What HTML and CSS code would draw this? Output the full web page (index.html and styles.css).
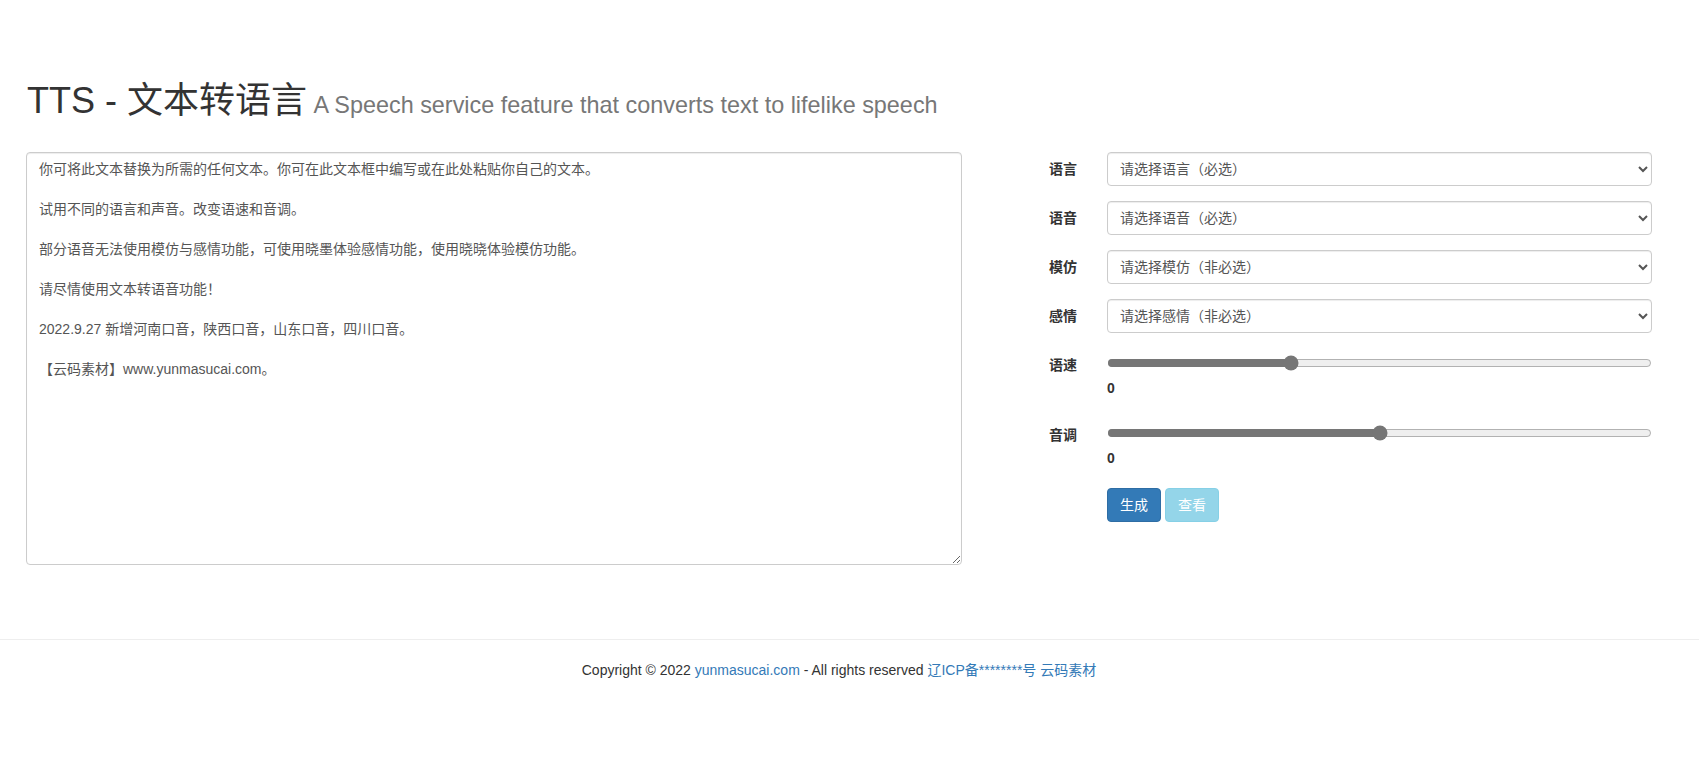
FILE: index.html
```html
<!DOCTYPE html>
<html lang="zh-CN">
<head>
    <meta charset="UTF-8">
    <meta name="viewport" content="width=device-width, initial-scale=1.0">
    <title>TTS - 文本转语言</title>
    <link rel="stylesheet" href="styles.css">
</head>
<body>
    <div class="container">
        <h1>TTS - 文本转语言<small> A Speech service feature that converts text to lifelike speech</small></h1>
        <div class="row">
            <div class="col-text">
                <textarea class="form-control text-input" id="text">你可将此文本替换为所需的任何文本。你可在此文本框中编写或在此处粘贴你自己的文本。

试用不同的语言和声音。改变语速和音调。

部分语音无法使用模仿与感情功能，可使用晓墨体验感情功能，使用晓晓体验模仿功能。

请尽情使用文本转语音功能！

2022.9.27 新增河南口音，陕西口音，山东口音，四川口音。

【云码素材】www.yunmasucai.com。</textarea>
            </div>
            <div class="col-form">
                <form class="form-horizontal">
                    <div class="form-group">
                        <label class="control-label" for="lang">语言</label>
                        <div class="control">
                            <select class="form-control" id="lang">
                                <option>请选择语言（必选）</option>
                            </select>
                        </div>
                    </div>
                    <div class="form-group">
                        <label class="control-label" for="voice">语音</label>
                        <div class="control">
                            <select class="form-control" id="voice">
                                <option>请选择语音（必选）</option>
                            </select>
                        </div>
                    </div>
                    <div class="form-group">
                        <label class="control-label" for="style">模仿</label>
                        <div class="control">
                            <select class="form-control" id="style">
                                <option>请选择模仿（非必选）</option>
                            </select>
                        </div>
                    </div>
                    <div class="form-group">
                        <label class="control-label" for="emotion">感情</label>
                        <div class="control">
                            <select class="form-control" id="emotion">
                                <option>请选择感情（非必选）</option>
                            </select>
                        </div>
                    </div>
                    <div class="form-group">
                        <label class="control-label" for="rate">语速</label>
                        <div class="control slider-box">
                            <input type="range" id="rate" min="-50" max="100" value="0">
                            <div class="slider-value" id="rateValue">0</div>
                        </div>
                    </div>
                    <div class="form-group">
                        <label class="control-label" for="pitch">音调</label>
                        <div class="control slider-box">
                            <input type="range" id="pitch" min="-50" max="50" value="0">
                            <div class="slider-value" id="pitchValue">0</div>
                        </div>
                    </div>
                    <div class="form-group">
                        <div class="control offset">
                            <button type="button" class="btn btn-primary" id="make">生成</button>
                            <button type="button" class="btn btn-info" id="view" disabled>查看</button>
                        </div>
                    </div>
                </form>
            </div>
        </div>
    </div>
    <footer class="footer">
        <div class="container">
            Copyright &copy; 2022 <a href="#">yunmasucai.com</a> - All rights reserved <a href="#">辽ICP备********号</a> <a href="#">云码素材</a>
        </div>
    </footer>
    <script>
        // 滑块数值显示
        document.getElementById("rate").addEventListener("input", (e) => {
            document.getElementById("rateValue").textContent = e.target.value;
        });
        document.getElementById("pitch").addEventListener("input", (e) => {
            document.getElementById("pitchValue").textContent = e.target.value;
        });
    </script>
</body>
</html>
```

FILE: styles.css
```css
* {
    box-sizing: border-box;
}

body {
    margin: 0;
    font-family: "Liberation Sans", "Noto Sans CJK SC", sans-serif;
    font-size: 14px;
    line-height: 20px;
    color: #333;
    background-color: #fff;
}

a {
    color: #337ab7;
    text-decoration: none;
}

.container {
    width: 1656px;
    margin-left: 11px;
    padding: 0 15px;
}

h1 {
    font-size: 36px;
    font-weight: normal;
    line-height: 40px;
    margin: 81px 0 27px 1px;
    white-space: nowrap;
}

h1 small {
    font-size: 65%;
    font-weight: normal;
    color: #777;
}

.row {
    display: grid;
    grid-template-columns: 1fr 660px;
    column-gap: 30px;
}

.form-control {
    display: block;
    width: 100%;
    font-family: "Liberation Sans", "Noto Sans CJK SC", sans-serif;
    font-size: 14px;
    line-height: 20px;
    color: #555;
    background-color: #fff;
    border: 1px solid #ccc;
    border-radius: 4px;
    box-shadow: inset 0 1px 1px rgba(0, 0, 0, .075);
}

.text-input {
    height: 413px;
    padding: 6px 12px;
    resize: vertical;
}

select.form-control {
    height: 34px;
    padding: 6px 8px;
}

.form-group {
    display: grid;
    grid-template-columns: 85px 1fr;
    column-gap: 30px;
    margin-bottom: 15px;
}

.control-label {
    padding-top: 7px;
    text-align: right;
    font-weight: bold;
}

.offset {
    grid-column: 2;
}

.slider-box {
    padding-top: 7px;
    padding-bottom: 5px;
}

.slider-box input[type="range"] {
    display: block;
    width: 100%;
    height: 16px;
    margin: 0;
    accent-color: #767676;
}

.slider-value {
    margin-top: 7px;
    font-weight: bold;
}

.btn {
    display: inline-block;
    padding: 6px 12px;
    font-family: inherit;
    font-size: 14px;
    line-height: 20px;
    border: 1px solid transparent;
    border-radius: 4px;
    cursor: pointer;
    color: #fff;
}

.btn-primary {
    background-color: #337ab7;
    border-color: #2e6da4;
}

.btn-info {
    background-color: #5bc0de;
    border-color: #46b8da;
}

.btn:disabled {
    opacity: .65;
    cursor: not-allowed;
}

.footer {
    margin-top: 74px;
    padding: 20px 0 30px;
    border-top: 1px solid #eee;
    text-align: center;
}
```
